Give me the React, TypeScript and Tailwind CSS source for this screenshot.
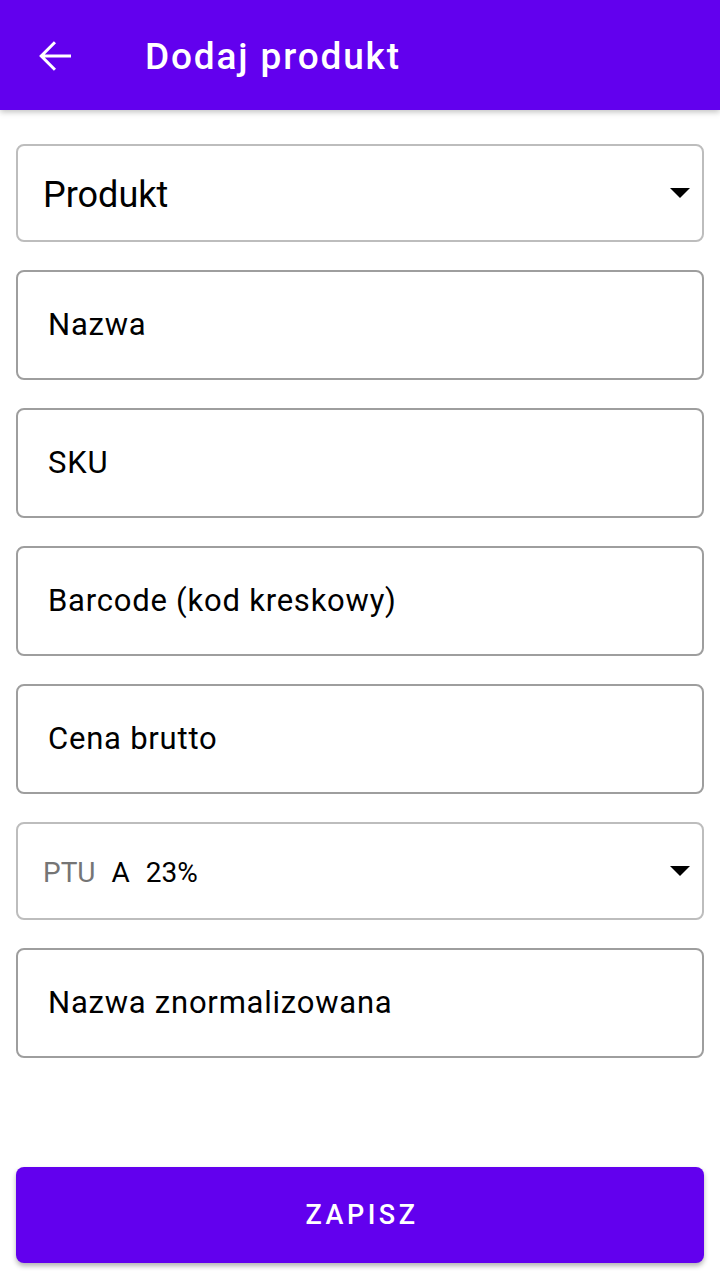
const fields = ['Nazwa', 'SKU', 'Barcode (kod kreskowy)', 'Cena brutto'];

function BackArrow() {
  return (
    <svg width="48" height="48" viewBox="0 0 24 24" className="text-white">
      <path
        d="M20 11.25H6.9l5.6-5.6L11.45 4.6 4.05 12l7.4 7.4 1.05-1.05-5.6-5.6H20z"
        fill="currentColor"
      />
    </svg>
  );
}

function Caret() {
  return (
    <svg width="20" height="10" viewBox="0 0 20 10" className="shrink-0">
      <path d="M0 0h20L10 10z" fill="#000" />
    </svg>
  );
}

function TextField({ label }: { label: string }) {
  return (
    <div className="flex h-[110px] items-center rounded-lg border-2 border-[#9e9e9e] px-[30px]">
      <span className="text-[31px] tracking-[0.025em] text-black">{label}</span>
    </div>
  );
}

export default function App() {
  return (
    <div className="flex h-[1281px] flex-col bg-white [font-family:Roboto,'Liberation_Sans',sans-serif]">
      <header className="z-10 flex h-[110px] shrink-0 items-center bg-[#6200ee] shadow-[0_2px_6px_rgba(0,0,0,0.25)]">
        <div className="flex w-[145px] items-center pl-[31px] pt-[2px]">
          <BackArrow />
        </div>
        <h1 className="pt-[3px] text-[37px] font-medium tracking-[0.05em] text-white">Dodaj produkt</h1>
      </header>

      <main className="flex flex-1 flex-col gap-[28px] px-4 pt-[34px]">
        <div className="flex h-[98px] items-center justify-between rounded-lg border-2 border-[#bdbdbd] pl-[25px] pr-[12px]">
          <span className="pt-[3px] text-[36px] text-black">Produkt</span>
          <Caret />
        </div>

        {fields.map((f) => (
          <TextField key={f} label={f} />
        ))}

        <div className="flex h-[98px] items-center justify-between rounded-lg border-2 border-[#bdbdbd] pl-[25px] pr-[12px]">
          <div className="flex items-baseline pt-[4px] text-[28px]">
            <span className="text-[#757575]">PTU</span>
            <span className="ml-[16px] text-black">A</span>
            <span className="ml-[16px] text-black">23%</span>
          </div>
          <Caret />
        </div>

        <TextField label="Nazwa znormalizowana" />
      </main>

      <div className="px-4 pb-[18px]">
        <button
          type="button"
          className="flex h-[96px] w-full items-center justify-center rounded-lg bg-[#6200ee] pl-[4px] text-[27px] font-medium tracking-[0.13em] text-white shadow-[0_3px_5px_rgba(0,0,0,0.3)]"
        >
          ZAPISZ
        </button>
      </div>
    </div>
  );
}
